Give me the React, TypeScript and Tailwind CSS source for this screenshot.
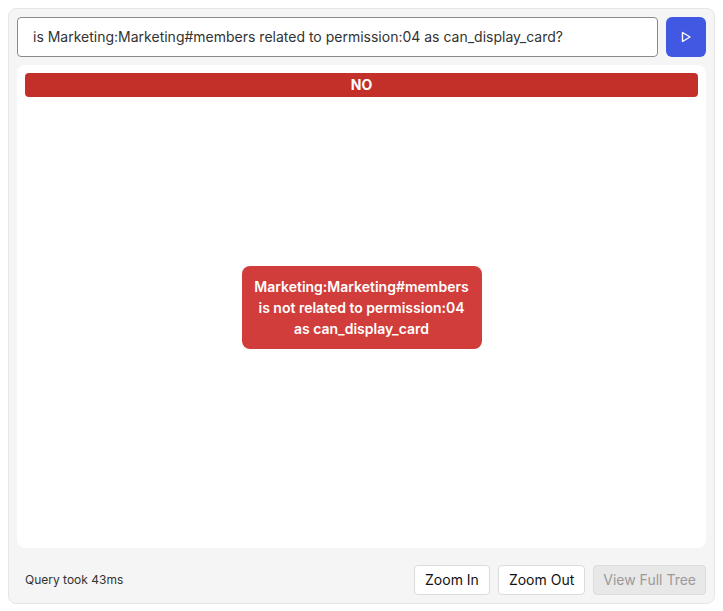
export default function App() {
  return (
    <div className="min-h-screen bg-white p-2" style={{ fontFamily: 'Inter, "Noto Sans", sans-serif' }}>
      <div className="flex h-[596px] flex-col rounded-lg border border-[#e6e6e6] bg-[#f5f5f5] p-2">
        <div className="flex gap-2">
          <div className="flex h-10 flex-1 items-center rounded border border-[#8a8a8a] bg-white px-[15px] text-sm text-[#333]">
            is Marketing:Marketing#members related to permission:04 as can_display_card?
          </div>
          <button className="flex h-10 w-10 items-center justify-center rounded-md bg-[#4159e2]">
            <svg width="12" height="12" viewBox="0 0 12 12" fill="none" stroke="white" strokeWidth="1.4" strokeLinejoin="round">
              <path d="M2.5 1.5 L10 6 L2.5 10.5 Z" />
            </svg>
          </button>
        </div>

        <div className="mt-2 flex flex-1 flex-col rounded-lg bg-white p-2">
          <div className="flex h-6 items-center justify-center rounded bg-[#c3302a] text-sm font-bold text-white">
            NO
          </div>
          <div className="flex flex-1 items-center justify-center pb-[22px]">
            <div className="w-[240px] rounded-lg bg-[#d13d3a] px-3 py-[10px] text-center text-sm font-semibold leading-[21px] text-white">
              Marketing:Marketing#members
              <br />
              is not related to permission:04
              <br />
              as can_display_card
            </div>
          </div>
        </div>

        <div className="mt-[17px] flex items-center justify-between pl-2">
          <span className="text-xs text-[#333]">Query took 43ms</span>
          <div className="flex gap-2">
            <button className="h-[30px] rounded border border-[#dcdcdc] bg-white px-[10px] text-sm text-[#111]">
              Zoom In
            </button>
            <button className="h-[30px] rounded border border-[#dcdcdc] bg-white px-[10px] text-sm text-[#111]">
              Zoom Out
            </button>
            <button className="h-[30px] rounded border border-[#dcdcdc] bg-[#e8e8e8] px-[9px] text-sm text-[#9a9a9a]">
              View Full Tree
            </button>
          </div>
        </div>
      </div>
    </div>
  )
}
